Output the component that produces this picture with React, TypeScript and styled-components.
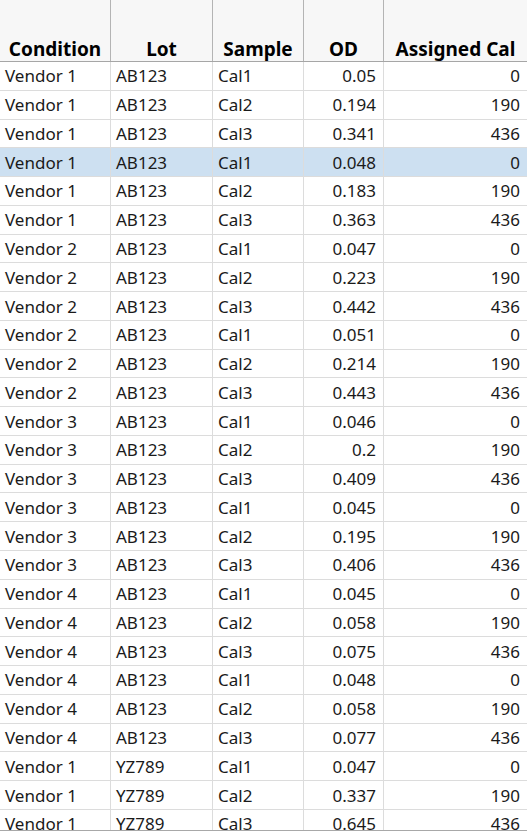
import React from "react";
import styled, { createGlobalStyle } from "styled-components";

const GlobalStyle = createGlobalStyle`
  html, body {
    margin: 0;
    padding: 0;
    background: #ffffff;
  }
  body {
    font-family: "Noto Sans", "Open Sans", "Liberation Sans", sans-serif;
  }
`;

type Row = [string, string, string, string, string];

const rows: Row[] = [
  ["Vendor 1", "AB123", "Cal1", "0.05", "0"],
  ["Vendor 1", "AB123", "Cal2", "0.194", "190"],
  ["Vendor 1", "AB123", "Cal3", "0.341", "436"],
  ["Vendor 1", "AB123", "Cal1", "0.048", "0"],
  ["Vendor 1", "AB123", "Cal2", "0.183", "190"],
  ["Vendor 1", "AB123", "Cal3", "0.363", "436"],
  ["Vendor 2", "AB123", "Cal1", "0.047", "0"],
  ["Vendor 2", "AB123", "Cal2", "0.223", "190"],
  ["Vendor 2", "AB123", "Cal3", "0.442", "436"],
  ["Vendor 2", "AB123", "Cal1", "0.051", "0"],
  ["Vendor 2", "AB123", "Cal2", "0.214", "190"],
  ["Vendor 2", "AB123", "Cal3", "0.443", "436"],
  ["Vendor 3", "AB123", "Cal1", "0.046", "0"],
  ["Vendor 3", "AB123", "Cal2", "0.2", "190"],
  ["Vendor 3", "AB123", "Cal3", "0.409", "436"],
  ["Vendor 3", "AB123", "Cal1", "0.045", "0"],
  ["Vendor 3", "AB123", "Cal2", "0.195", "190"],
  ["Vendor 3", "AB123", "Cal3", "0.406", "436"],
  ["Vendor 4", "AB123", "Cal1", "0.045", "0"],
  ["Vendor 4", "AB123", "Cal2", "0.058", "190"],
  ["Vendor 4", "AB123", "Cal3", "0.075", "436"],
  ["Vendor 4", "AB123", "Cal1", "0.048", "0"],
  ["Vendor 4", "AB123", "Cal2", "0.058", "190"],
  ["Vendor 4", "AB123", "Cal3", "0.077", "436"],
  ["Vendor 1", "YZ789", "Cal1", "0.047", "0"],
  ["Vendor 1", "YZ789", "Cal2", "0.337", "190"],
  ["Vendor 1", "YZ789", "Cal3", "0.645", "436"],
];

const headers = ["Condition", "Lot", "Sample", "OD", "Assigned Cal"];
const numeric = [false, false, false, true, true];
const COLS = "111px 102px 91px 80px 143px";

const App = () => {
  return (
    <>
      <GlobalStyle />
      <S.Table>
        <S.HeaderRow>
          {headers.map((h) => (
            <S.HeaderCell key={h}>{h}</S.HeaderCell>
          ))}
        </S.HeaderRow>
        {rows.map((row, i) => (
          <S.Row key={i} selected={i === 3}>
            {row.map((value, c) => (
              <S.Cell key={c} numeric={numeric[c]}>
                {value}
              </S.Cell>
            ))}
          </S.Row>
        ))}
      </S.Table>
    </>
  );
};

export default App;

const S = {
  Table: styled.div`
    width: 527px;
    height: 830px;
    overflow: hidden;
    border-bottom: 1px solid #a8a8a8;
    color: #111;
  `,
  HeaderRow: styled.div`
    display: grid;
    grid-template-columns: ${COLS};
    height: 61px;
    background: #f7f7f7;
    border-bottom: 1px solid #a6a6a6;
  `,
  HeaderCell: styled.div`
    display: flex;
    align-items: flex-end;
    justify-content: center;
    padding-bottom: 0;
    font-weight: 700;
    font-size: 19px;
    line-height: 24px;
    color: #000;
    border-right: 1px solid #b4b4b4;
    &:last-child {
      border-right: none;
    }
  `,
  Row: styled.div<{ selected?: boolean }>`
    display: grid;
    grid-template-columns: ${COLS};
    height: 28.77px;
    box-sizing: border-box;
    border-bottom: 1px solid #dcdcdc;
    background: ${(p) => (p.selected ? "#cde0f1" : "#ffffff")};
  `,
  Cell: styled.div<{ numeric?: boolean }>`
    display: flex;
    align-items: center;
    justify-content: ${(p) => (p.numeric ? "flex-end" : "flex-start")};
    padding: ${(p) => (p.numeric ? "0 7px 0 0" : "0 0 0 5px")};
    font-size: 17px;
    color: #1a1a1a;
    border-right: 1px solid #dcdcdc;
    overflow: hidden;
    white-space: nowrap;
    &:last-child {
      border-right: none;
    }
  `,
};
